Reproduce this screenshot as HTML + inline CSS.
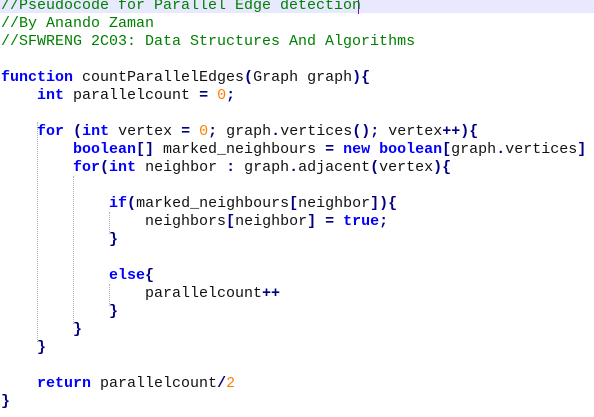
<!DOCTYPE html>
<html><head><meta charset="utf-8"><style>
html,body{margin:0;padding:0;background:#fff;width:594px;height:417px;overflow:hidden;position:relative}
pre{margin:0;position:absolute;left:1px;top:-3px;font-family:"Liberation Mono","DejaVu Sans Mono",monospace;font-size:15px;line-height:18px;color:#111}
.c{color:#008000}.k{color:#0000ff;font-weight:bold}.o{color:#000080;font-weight:bold}.n{color:#ff8000}
.hl{position:absolute;left:0;top:0;width:594px;height:13px;background:#e8e8ff}
.cur{position:absolute;left:358px;top:0;width:1px;height:14px;background:#8000ff}
.g{position:absolute;width:0;border-left:1px dotted #b0b0b0}
</style></head><body>
<div class="hl"></div><div class="cur"></div>
<div class="g" style="left:37px;top:122px;height:220px"></div>
<div class="g" style="left:73px;top:176px;height:148px"></div>
<div class="g" style="left:109px;top:212px;height:22px"></div>
<div class="g" style="left:109px;top:284px;height:22px"></div>
<pre><span class="c">//Pseudocode for Parallel Edge detection</span>
<span class="c">//By Anando Zaman</span>
<span class="c">//SFWRENG 2C03: Data Structures And Algorithms</span>

<span class="k">function</span> countParallelEdges<span class="o">(</span>Graph graph<span class="o">){</span>
    <span class="k">int</span> parallelcount <span class="o">=</span> <span class="n">0</span><span class="o">;</span>

    <span class="k">for</span> <span class="o">(</span><span class="k">int</span> vertex <span class="o">=</span> <span class="n">0</span><span class="o">;</span> graph<span class="o">.</span>vertices<span class="o">();</span> vertex<span class="o">++){</span>
        <span class="k">boolean</span><span class="o">[]</span> marked_neighbours <span class="o">=</span> <span class="k">new</span> <span class="k">boolean</span><span class="o">[</span>graph<span class="o">.</span>vertices<span class="o">]</span>
        <span class="k">for</span><span class="o">(</span><span class="k">int</span> neighbor <span class="o">:</span> graph<span class="o">.</span>adjacent<span class="o">(</span>vertex<span class="o">){</span>

            <span class="k">if</span><span class="o">(</span>marked_neighbours<span class="o">[</span>neighbor<span class="o">]){</span>
                neighbors<span class="o">[</span>neighbor<span class="o">]</span> <span class="o">=</span> <span class="k">true</span><span class="o">;</span>
            <span class="o">}</span>

            <span class="k">else</span><span class="o">{</span>
                parallelcount<span class="o">++</span>
            <span class="o">}</span>
        <span class="o">}</span>
    <span class="o">}</span>

    <span class="k">return</span> parallelcount<span class="o">/</span><span class="n">2</span>
<span class="o">}</span></pre>
</body></html>
